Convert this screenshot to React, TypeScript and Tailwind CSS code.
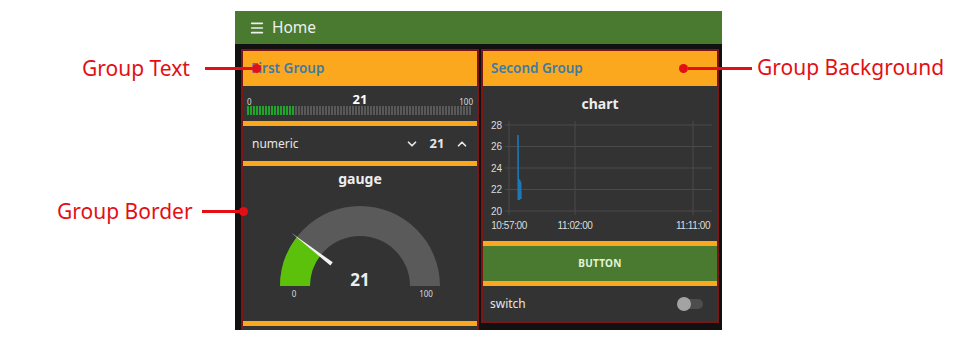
import { ChevronDown, ChevronUp, Menu } from "lucide-react";

// Node-RED style dashboard mock with callout labels

const ORANGE = "bg-[#fca81f]";

function GroupHeader({ title }: { title: string }) {
  return (
    <div className={`flex h-[35px] items-center px-[8px] ${ORANGE}`}>
      <span className="text-[13.5px] font-semibold text-[#3d7ba3]">{title}</span>
    </div>
  );
}

function LevelWidget() {
  const ticks = Array.from({ length: 75 }, (_, i) => i);
  return (
    <div className="h-[35px] bg-[#333] px-[4px] pt-[7px]">
      <div className="grid h-[12px] grid-cols-3 items-end text-[#ddd]">
        <span className="text-[8px] leading-none">0</span>
        <span className="text-center text-[13px] font-bold leading-none text-white">21</span>
        <span className="text-right text-[8px] leading-none">100</span>
      </div>
      <svg width="225" height="9" className="mt-[1px] block">
        {ticks.map((i) => (
          <rect key={i} x={i * 3} y={0} width={2} height={9} fill={i < 16 ? "#20a52c" : "#595959"} />
        ))}
      </svg>
    </div>
  );
}

function NumericWidget() {
  return (
    <div className="flex h-[35px] items-center justify-between bg-[#333] pl-[9px] pr-[8px] text-[#e6e6e6]">
      <span className="text-[12px]">numeric</span>
      <div className="flex items-center">
        <ChevronDown className="h-[14px] w-[14px]" strokeWidth={3} />
        <span className="w-[36px] text-center text-[13px] font-bold">21</span>
        <ChevronUp className="h-[14px] w-[14px]" strokeWidth={3} />
      </div>
    </div>
  );
}

function GaugeWidget() {
  const cx = 117;
  const cy = 120;
  const R = 80;
  const r = 50;
  const a = Math.PI - 0.21 * Math.PI;
  const ox = cx + R * Math.cos(a);
  const oy = cy - R * Math.sin(a);
  const ix = cx + r * Math.cos(a);
  const iy = cy - r * Math.sin(a);
  const tipR = 87;
  const baseR = 36;
  const ux = Math.cos(a);
  const uy = -Math.sin(a);
  const px = -uy;
  const py = ux;
  const tx = cx + tipR * ux;
  const ty = cy + tipR * uy;
  const bx = cx + baseR * ux;
  const by = cy + baseR * uy;
  const needle = `${tx},${ty} ${bx + px * 2},${by + py * 2} ${bx - px * 2},${by - py * 2}`;
  return (
    <div className="h-[155px] bg-[#333]">
      <svg width="234" height="155" className="block">
        <text x={117} y={18} textAnchor="middle" fill="#eee" fontSize="14" fontWeight="700">
          gauge
        </text>
        <path
          d={`M ${cx - R} ${cy} A ${R} ${R} 0 0 1 ${cx + R} ${cy} L ${cx + r} ${cy} A ${r} ${r} 0 0 0 ${cx - r} ${cy} Z`}
          fill="#5a5a5a"
        />
        <path
          d={`M ${cx - R} ${cy} A ${R} ${R} 0 0 1 ${ox} ${oy} L ${ix} ${iy} A ${r} ${r} 0 0 0 ${cx - r} ${cy} Z`}
          fill="#5cc10b"
        />
        <polygon points={needle} fill="#f2f2f2" />
        <text x={117} y={120} textAnchor="middle" fill="#eee" fontSize="17" fontWeight="700">
          21
        </text>
        <text x={51} y={131} textAnchor="middle" fill="#ddd" fontSize="8">
          0
        </text>
        <text x={183} y={131} textAnchor="middle" fill="#ddd" fontSize="8">
          100
        </text>
      </svg>
    </div>
  );
}

function ChartWidget() {
  const ys = [
    { v: "28", y: 39 },
    { v: "26", y: 60.5 },
    { v: "24", y: 82 },
    { v: "22", y: 103.5 },
    { v: "20", y: 125 },
  ];
  const xs = [
    { v: "10:57:00", x: 26 },
    { v: "11:02:00", x: 92 },
    { v: "11:11:00", x: 210 },
  ];
  return (
    <div className="h-[155px] bg-[#333]">
      <svg width="234" height="155" className="block font-['Liberation_Sans',sans-serif]">
        <text x={117} y={23} textAnchor="middle" fill="#eee" fontSize="14" fontWeight="700" fontFamily="Noto Sans, sans-serif">
          chart
        </text>
        {ys.map((t) => (
          <g key={t.v}>
            <line x1={22} x2={229} y1={t.y} y2={t.y} stroke="#4a4a4a" strokeWidth={1} />
            <text x={19} y={t.y + 3.5} textAnchor="end" fill="#ddd" fontSize="10">
              {t.v}
            </text>
          </g>
        ))}
        {xs.map((t) => (
          <g key={t.v}>
            <line x1={t.x} x2={t.x} y1={35} y2={129} stroke="#4a4a4a" strokeWidth={1} />
            <text x={t.x} y={143} textAnchor="middle" fill="#ddd" fontSize="10" letterSpacing="-0.4">
              {t.v}
            </text>
          </g>
        ))}
        <polyline
          points="35,49 35.3,114 35.8,93 36.3,114 36.8,94 37.3,113 37.6,96 37.9,113"
          fill="none"
          stroke="#1f77b4"
          strokeWidth={1.6}
        />
      </svg>
    </div>
  );
}

function ButtonWidget() {
  return (
    <div className="flex h-[35px] items-center justify-center bg-[#4a7a2f]">
      <span className="text-[10px] font-bold tracking-wide text-[#e6f3d6]">BUTTON</span>
    </div>
  );
}

function SwitchWidget() {
  return (
    <div className="flex h-[35px] items-center justify-between bg-[#333] pl-[7px] pr-[14px]">
      <span className="text-[12px] text-[#e6e6e6]">switch</span>
      <div className="relative h-[10px] w-[24px] rounded-full bg-[#4d4d4d]">
        <span className="absolute left-[-2px] top-[-2px] h-[14px] w-[14px] rounded-full bg-[#a3a3a3]" />
      </div>
    </div>
  );
}

function Gap() {
  return <div className={`h-[5px] ${ORANGE}`} />;
}

function Group({ title, children }: { title: string; children: React.ReactNode }) {
  return (
    <div className={`flex w-[238px] flex-col self-start border-2 border-[#7c1616] ${ORANGE}`}>
      <GroupHeader title={title} />
      {children}
    </div>
  );
}

// callout line: x1..x2 with a dot at the "dot" end
function Pointer({ x1, x2, y, dotLeft }: { x1: number; x2: number; y: number; dotLeft?: boolean }) {
  return (
    <div
      className={`absolute flex items-center ${dotLeft ? "flex-row-reverse" : ""}`}
      style={{ left: x1, top: y - 4.5, width: x2 - x1 + 4.5 }}
    >
      <div className="h-[3px] flex-1 bg-[#e30f14]" />
      <div className="h-[9px] w-[9px] shrink-0 rounded-full bg-[#e30f14]" />
    </div>
  );
}

export default function App() {
  return (
    <div className="relative h-[343px] w-[971px] overflow-hidden bg-white font-['Noto_Sans','Open_Sans',sans-serif]">
      <div className="pl-[235px] pt-[11px]">
        <div className="h-[319px] w-[487px] overflow-hidden bg-[#111]">
          <div className="flex h-[33px] items-center gap-[7px] bg-[#4a7a2f] pl-[14px] text-[#f0f0f0]">
            <Menu className="h-[16px] w-[16px]" strokeWidth={2.5} />
            <span className="text-[15.5px]">Home</span>
          </div>
          <div className="flex gap-[2px] pl-[6px] pr-[3px] pt-[5px]">
            <Group title="First Group">
              <LevelWidget />
              <Gap />
              <NumericWidget />
              <Gap />
              <GaugeWidget />
              <Gap />
              <div className="h-[35px] bg-[#333]" />
            </Group>
            <Group title="Second Group">
              <ChartWidget />
              <Gap />
              <ButtonWidget />
              <Gap />
              <SwitchWidget />
            </Group>
          </div>
        </div>
      </div>

      <span className="absolute left-[82px] top-[55px] text-[21px] leading-[26px] text-[#e30f14]">Group Text</span>
      <Pointer x1={205} x2={256} y={68} />
      <span className="absolute left-[57px] top-[198px] text-[21px] leading-[26px] text-[#e30f14]">Group Border</span>
      <Pointer x1={202} x2={243} y={211} />
      <span className="absolute left-[757px] top-[54px] text-[21px] leading-[26px] text-[#e30f14]">Group Background</span>
      <Pointer x1={679} x2={747} y={68} dotLeft />
    </div>
  );
}
